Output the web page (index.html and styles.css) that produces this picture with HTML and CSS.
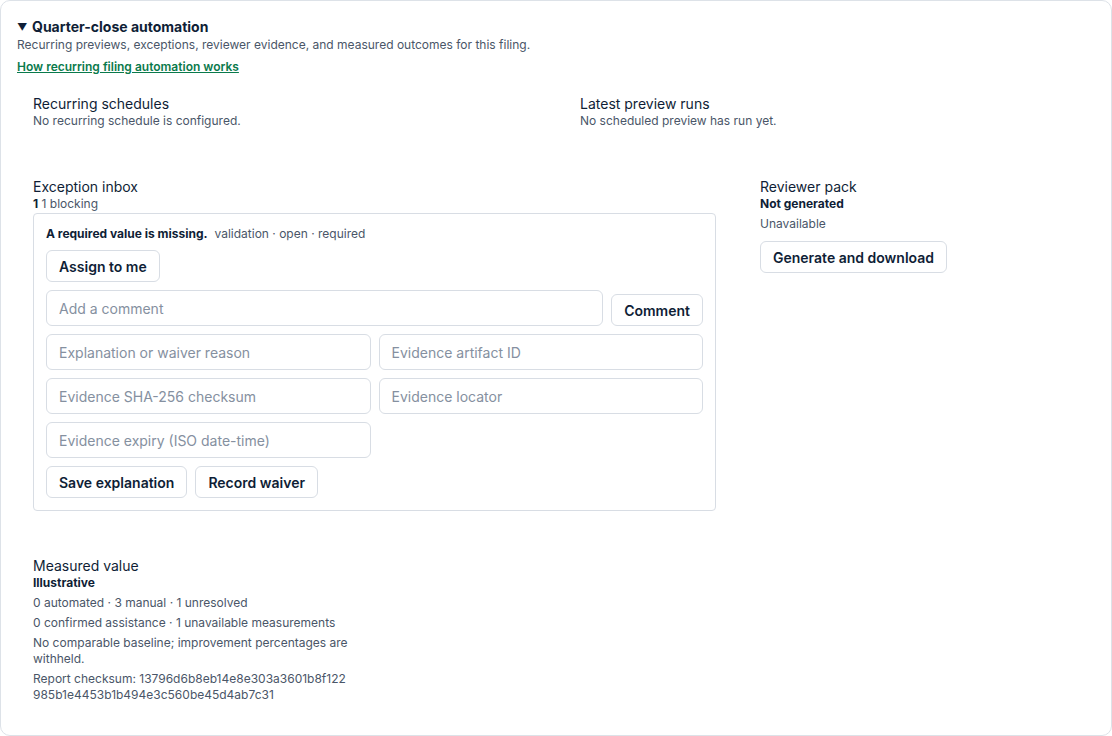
FILE: index.html
```html
<!DOCTYPE html>
<html lang="en">
<head>
<meta charset="utf-8">
<title>Quarter-close automation</title>
<link rel="stylesheet" href="styles.css">
</head>
<body>
<div class="panel">
  <div class="head">
    <h2 class="title"><span class="caret">▼</span>Quarter-close automation</h2>
    <p class="subtitle">Recurring previews, exceptions, reviewer evidence, and measured outcomes for this filing.</p>
    <a class="help-link" href="#">How recurring filing automation works</a>
  </div>

  <div class="body">
    <div class="row row-top">
      <section>
        <h3 class="sec-title">Recurring schedules</h3>
        <p class="muted">No recurring schedule is configured.</p>
      </section>
      <section>
        <h3 class="sec-title">Latest preview runs</h3>
        <p class="muted">No scheduled preview has run yet.</p>
      </section>
    </div>

    <div class="row row-mid">
      <section>
        <h3 class="sec-title">Exception inbox</h3>
        <p class="count"><strong>1</strong> 1 blocking</p>
        <div class="exception">
          <p class="exc-head"><strong>A required value is missing.</strong><span class="exc-meta">validation · open · required</span></p>
          <div class="actions">
            <button class="btn">Assign to me</button>
          </div>
          <div class="comment-row">
            <input class="field" type="text" placeholder="Add a comment">
            <button class="btn">Comment</button>
          </div>
          <div class="field-grid">
            <input class="field" type="text" placeholder="Explanation or waiver reason">
            <input class="field" type="text" placeholder="Evidence artifact ID">
            <input class="field" type="text" placeholder="Evidence SHA-256 checksum">
            <input class="field" type="text" placeholder="Evidence locator">
            <input class="field" type="text" placeholder="Evidence expiry (ISO date-time)">
          </div>
          <div class="actions">
            <button class="btn">Save explanation</button>
            <button class="btn">Record waiver</button>
          </div>
        </div>
      </section>
      <section>
        <h3 class="sec-title">Reviewer pack</h3>
        <p class="strong">Not generated</p>
        <p class="muted gap">Unavailable</p>
        <button class="btn btn-gen">Generate and download</button>
      </section>
    </div>

    <div class="row row-bottom">
      <section class="measured">
        <h3 class="sec-title">Measured value</h3>
        <p class="strong">Illustrative</p>
        <p class="muted gap">0 automated · 3 manual · 1 unresolved</p>
        <p class="muted gap">0 confirmed assistance · 1 unavailable measurements</p>
        <p class="muted gap">No comparable baseline; improvement percentages are withheld.</p>
        <p class="muted gap checksum">Report checksum: 13796d6b8eb14e8e303a3601b8f122985b1e4453b1b494e3c560be45d4ab7c31</p>
      </section>
    </div>
  </div>
</div>
</body>
</html>
```

FILE: styles.css
```css
* { box-sizing: border-box; }
html, body { margin: 0; padding: 0; background: #ffffff; }
body {
  font-family: Inter, "Noto Sans", "Liberation Sans", sans-serif;
  color: #0f1e36;
}
.panel {
  min-height: 100vh;
  border: 1px solid #dde2e8;
  border-radius: 10px;
  padding: 16px 16px 8px 16px;
}
.title {
  margin: 0;
  font-size: 14px;
  line-height: 20px;
  font-weight: 700;
  color: #0f1e36;
}
.caret {
  font-size: 10px;
  display: inline-block;
  width: 15px;
  vertical-align: 1px;
}
.subtitle {
  margin: 0;
  font-size: 12px;
  line-height: 16px;
  color: #4a5668;
}
.help-link {
  display: inline-block;
  margin-top: 6px;
  font-size: 12px;
  line-height: 16px;
  font-weight: 600;
  color: #0a7a4c;
  text-decoration: underline;
}
.body { padding-left: 16px; padding-right: 16px; }
p { margin: 0; }
.row { display: grid; }
.row-top {
  margin-top: 20px;
  grid-template-columns: 1fr 1fr;
  column-gap: 48px;
}
.row-mid {
  margin-top: 49px;
  grid-template-columns: 683px 1fr;
  column-gap: 44px;
}
.row-bottom {
  margin-top: 46px;
  grid-template-columns: 320px 1fr;
}
.sec-title {
  margin: 0;
  font-size: 14px;
  line-height: 18px;
  font-weight: 400;
  color: #0f1e36;
}
.muted {
  font-size: 12px;
  line-height: 16px;
  color: #4a5668;
}
.strong {
  font-size: 12px;
  line-height: 16px;
  font-weight: 700;
  color: #0f1e36;
}
.gap { margin-top: 4px; }
.count {
  font-size: 12px;
  line-height: 16px;
  color: #4a5668;
}
.count strong { color: #0f1e36; }
.exception {
  margin-top: 1px;
  border: 1px solid #d8dde4;
  border-radius: 4px;
  padding: 12px;
  display: flex;
  flex-direction: column;
  gap: 8px;
}
.exc-head {
  font-size: 12px;
  line-height: 16px;
}
.exc-head strong { font-weight: 700; color: #0f1e36; margin-right: 7px; }
.exc-meta { color: #4a5668; }
.actions { display: flex; gap: 8px; }
.btn {
  font-family: inherit;
  height: 32px;
  padding: 0 12px;
  background: #ffffff;
  border: 1px solid #d8dde4;
  border-radius: 6px;
  font-size: 14px;
  font-weight: 600;
  color: #0f1e36;
  cursor: pointer;
}
.btn-gen { margin-top: 9px; }
.comment-row {
  display: flex;
  gap: 8px;
  align-items: flex-end;
}
.comment-row .field { flex: 1; }
.field-grid {
  display: grid;
  grid-template-columns: 1fr 1fr;
  gap: 8px;
}
.field {
  font-family: inherit;
  height: 36px;
  border: 1px solid #d8dde4;
  border-radius: 6px;
  padding: 0 12px;
  font-size: 14px;
  color: #0f1e36;
  background: #ffffff;
  min-width: 0;
}
.field::placeholder { color: #8590a0; }
.checksum { word-break: break-all; }
```
